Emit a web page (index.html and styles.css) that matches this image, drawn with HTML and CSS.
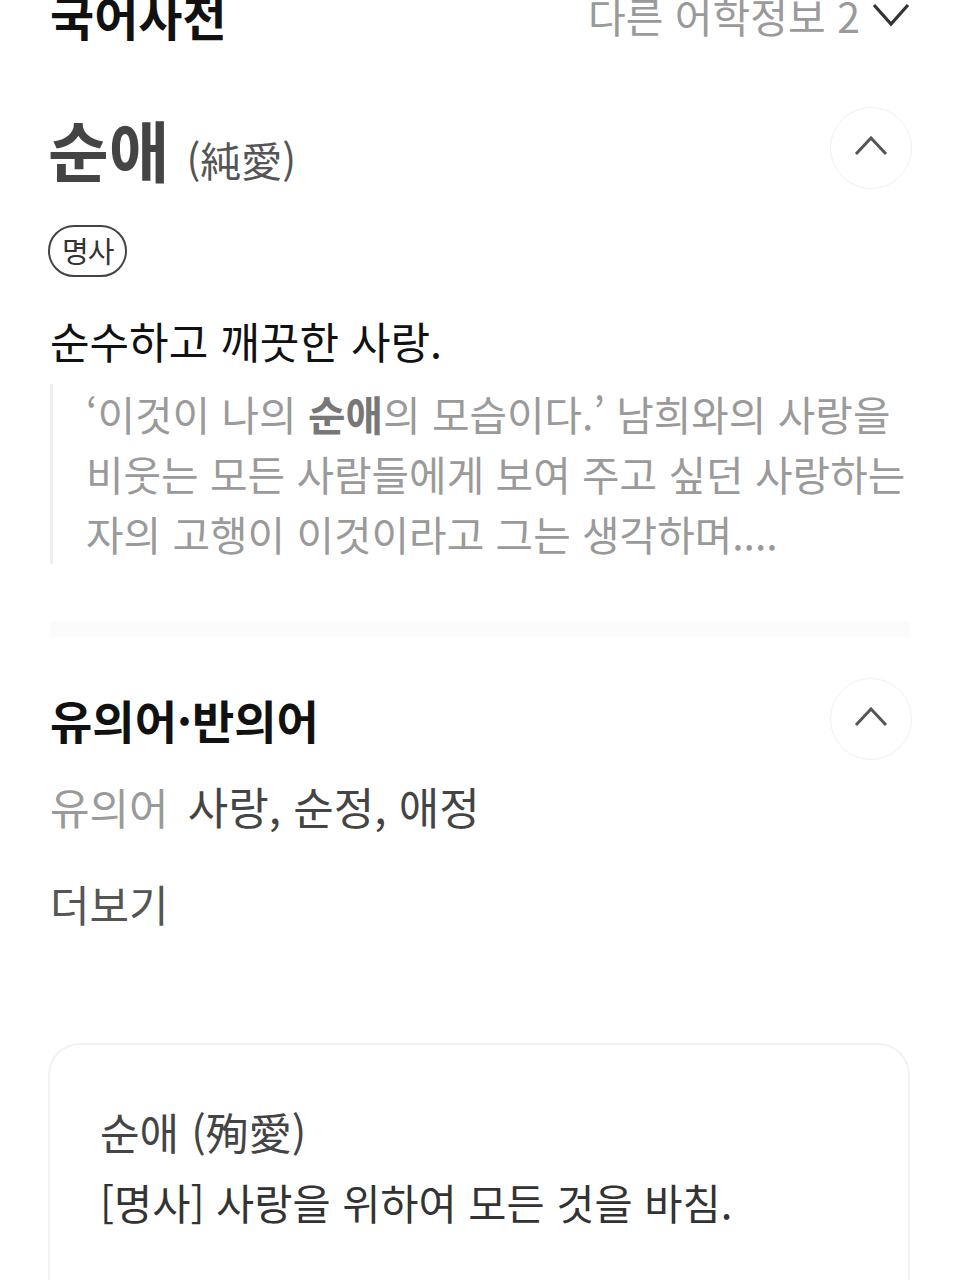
FILE: index.html
```html
<!DOCTYPE html>
<html lang="ko">
<head>
<meta charset="utf-8">
<link rel="stylesheet" href="styles.css">
</head>
<body>
<div class="page">
  <div class="header">
    <div class="header-title">국어사전</div>
    <div class="header-more">
      <span>다른 어학정보 2</span>
      <svg class="chev-down" width="38" height="24" viewBox="0 0 38 24"><path d="M2 2 L19 21 L36 2" fill="none" stroke="#333" stroke-width="3.2"/></svg>
    </div>
  </div>

  <div class="entry-head">
    <div class="entry-title"><span class="word">순애</span><span class="hanja">(純愛)</span></div>
    <div class="circle-btn"><svg width="34" height="20" viewBox="0 0 34 20"><path d="M2 18 L17 2 L32 18" fill="none" stroke="#555" stroke-width="3"/></svg></div>
  </div>

  <div class="pos-row"><span class="badge">명사</span></div>

  <div class="definition">순수하고 깨끗한 사랑.</div>

  <div class="quote">‘이것이 나의 <b>순애</b>의 모습이다.’ 남희와의 사랑을 비웃는 모든 사람들에게 보여 주고 싶던 사랑하는 자의 고행이 이것이라고 그는 생각하며....</div>

  <div class="separator"></div>

  <div class="section-head">
    <div class="section-title">유의어·반의어</div>
    <div class="circle-btn"><svg width="34" height="20" viewBox="0 0 34 20"><path d="M2 18 L17 2 L32 18" fill="none" stroke="#555" stroke-width="3"/></svg></div>
  </div>

  <div class="syn-row"><span class="syn-label">유의어</span><span class="syn-words">사랑, 순정, 애정</span></div>

  <div class="more">더보기</div>

  <div class="card">
    <div class="card-title">순애 (殉愛)</div>
    <div class="card-def">[명사] 사랑을 위하여 모든 것을 바침.</div>
  </div>
</div>
</body>
</html>
```

FILE: styles.css
```css
* { box-sizing: border-box; }
html, body { margin: 0; padding: 0; background: #fff; }
body {
  font-family: "Noto Sans CJK KR", "Noto Sans", sans-serif;
  color: #111;
  overflow: hidden;
}
.page {
  width: 960px;
  padding: 0 50px;
}
.header {
  display: flex;
  justify-content: space-between;
  align-items: center;
  height: 30px;
}
.header-title {
  font-size: 48px;
  font-weight: 700;
  line-height: 28px;
  color: #111;
}
.header-more {
  display: flex;
  align-items: center;
  gap: 12px;
  font-size: 41px;
  line-height: 32px;
  color: #9a9a9a;
}
.chev-down { display: block; }

.entry-head {
  margin-top: 78px;
  display: flex;
  justify-content: space-between;
  align-items: center;
  height: 80px;
}
.entry-title { display: flex; align-items: baseline; gap: 17px; }
.word {
  font-size: 66px;
  font-weight: 700;
  color: #444;
  line-height: 80px;
  margin-left: -2px;
}
.hanja {
  font-size: 41px;
  color: #555;
}
.circle-btn {
  width: 82px;
  height: 82px;
  border-radius: 50%;
  border: 1.5px solid #f0f0f0;
  display: flex;
  align-items: center;
  justify-content: center;
  margin-right: -2px;
}
.circle-btn svg { display: block; margin-top: -4px; }

.pos-row { margin-top: 37px; display: flex; }
.badge {
  height: 52px;
  padding: 0 12px;
  border: 2.5px solid #444;
  border-radius: 26px;
  font-size: 29px;
  line-height: 46px;
  color: #333;
  letter-spacing: -1px;
  margin-left: -2px;
}

.definition {
  margin-top: 33px;
  font-size: 43px;
  line-height: 60px;
  color: #111;
}

.quote {
  margin-top: 14px;
  border-left: 3px solid #eeeeee;
  padding-left: 33px;
  width: 868px;
  font-size: 40.8px;
  line-height: 60px;
  color: #9a9a9a;
  word-break: keep-all;
}
.quote b { font-weight: 700; color: #777; }

.separator {
  margin-top: 57px;
  height: 16px;
  background: #fbfbfb;
}

.section-head {
  margin-top: 42px;
  display: flex;
  justify-content: space-between;
  align-items: center;
  height: 80px;
}
.section-title {
  font-size: 46px;
  font-weight: 700;
  color: #111;
  line-height: 80px;
}

.syn-row {
  margin-top: 17px;
  display: flex;
  gap: 19px;
  line-height: 60px;
}
.syn-label { color: #9a9a9a; font-size: 43px; }
.syn-words { color: #444; font-size: 44px; }

.more {
  margin-top: 37px;
  font-size: 43px;
  line-height: 60px;
  color: #555;
}

.card {
  margin-top: 110px;
  border: 2px solid #f2f2f2;
  border-radius: 32px;
  padding: 56px 50px 60px;
  height: 300px;
  margin-left: -2px;
}
.card-title {
  font-size: 43px;
  line-height: 60px;
  color: #444;
}
.card-def {
  margin-top: 11px;
  font-size: 41.5px;
  line-height: 60px;
  color: #333;
}
```
